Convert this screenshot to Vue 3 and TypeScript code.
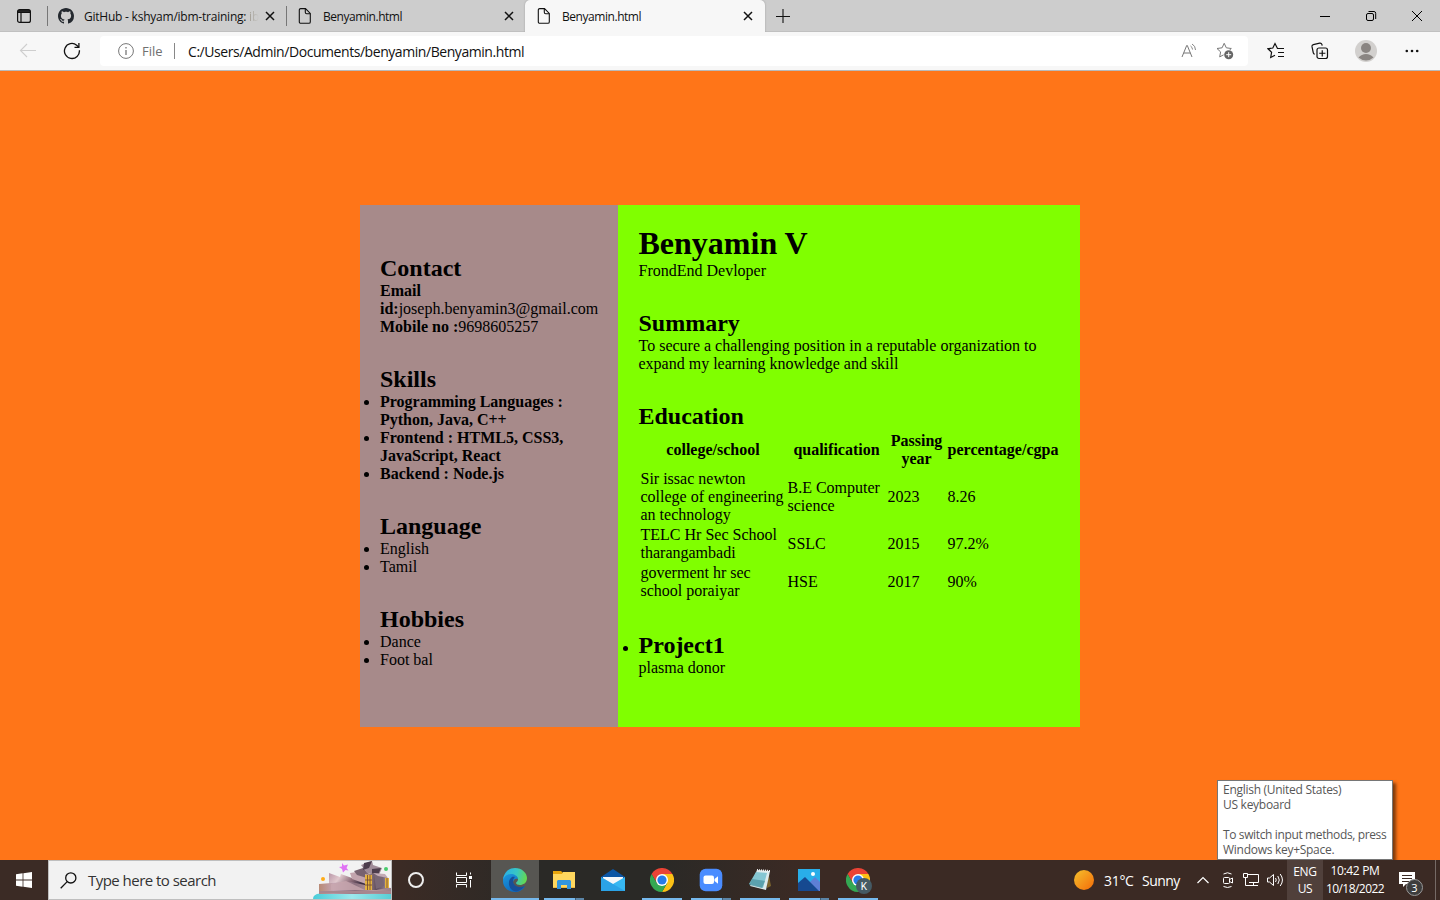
<script setup lang="ts">
interface Tab { title: string; icon: 'github' | 'file'; active: boolean; fade: string }
const tabs: Tab[] = [
  { title: 'GitHub - kshyam/ibm-training:', icon: 'github', active: false, fade: ' ib' },
  { title: 'Benyamin.html', icon: 'file', active: false, fade: '' },
  { title: 'Benyamin.html', icon: 'file', active: true, fade: '' },
]

const skills: string[] = [
  'Programming Languages : Python, Java, C++',
  'Frontend : HTML5, CSS3, JavaScript, React',
  'Backend : Node.js',
]
const languages: string[] = ['English', 'Tamil']
const hobbies: string[] = ['Dance', 'Foot bal']

interface School { place: string; degree: string; year: string; mark: string }
const schools: School[] = [
  { place: 'Sir issac newton college of engineering an technology', degree: 'B.E Computer science', year: '2023', mark: '8.26' },
  { place: 'TELC Hr Sec School tharangambadi', degree: 'SSLC', year: '2015', mark: '97.2%' },
  { place: 'goverment hr sec school poraiyar', degree: 'HSE', year: '2017', mark: '90%' },
]

interface TaskApp { name: string; state: 'none' | 'single' | 'multi' | 'active' }
const apps: TaskApp[] = [
  { name: 'edge', state: 'active' },
  { name: 'files', state: 'multi' },
  { name: 'mail', state: 'none' },
  { name: 'chrome', state: 'single' },
  { name: 'zoom', state: 'multi' },
  { name: 'notepad', state: 'single' },
  { name: 'photos', state: 'multi' },
  { name: 'profile', state: 'single' },
]
</script>

<template>
  <div class="screen">
    <header class="tabbar">
      <div class="tab-menu">
        <svg width="16" height="16" viewBox="0 0 16 16" fill="none" stroke="#111" stroke-width="1.2"><rect x="1.6" y="1.6" width="12.8" height="12.8" rx="2" /><path d="M2 3h12" stroke-width="1.8" /><path d="M2 4.5h12M5 4v10" /></svg>
      </div>
      <div v-for="(tab, i) in tabs" :key="i" class="tab" :class="{ active: tab.active, first: i === 0 }">
        <svg v-if="tab.icon === 'github'" class="tab-icon" width="16" height="16" viewBox="0 0 16 16"><path fill="#24292f" d="M8 0C3.58 0 0 3.58 0 8c0 3.54 2.29 6.53 5.47 7.59.4.07.55-.17.55-.38 0-.19-.01-.82-.01-1.49-2.01.37-2.53-.49-2.69-.94-.09-.23-.48-.94-.82-1.13-.28-.15-.68-.52-.01-.53.63-.01 1.08.58 1.23.82.72 1.21 1.87.87 2.33.66.07-.52.28-.87.51-1.07-1.78-.2-3.64-.89-3.64-3.95 0-.87.31-1.59.82-2.15-.08-.2-.36-1.02.08-2.12 0 0 .67-.21 2.2.82.64-.18 1.32-.27 2-.27s1.36.09 2 .27c1.53-1.04 2.2-.82 2.2-.82.44 1.1.16 1.92.08 2.12.51.56.82 1.27.82 2.15 0 3.07-1.87 3.75-3.65 3.95.29.25.54.73.54 1.48 0 1.07-.01 1.93-.01 2.2 0 .21.15.46.55.38A8.01 8.01 0 0 0 16 8c0-4.42-3.58-8-8-8z" /></svg>
        <svg v-else class="tab-icon" width="16" height="16" viewBox="0 0 16 16" fill="none" stroke="#111" stroke-width="1.1"><path d="M3.7.6h4.8l4.8 4.8v8.5a1.4 1.4 0 0 1-1.4 1.4H3.7a1.4 1.4 0 0 1-1.4-1.4V2A1.4 1.4 0 0 1 3.7.6z" /><path d="M8.3.8v3.5c0 .9.5 1.4 1.4 1.4h3.4" /></svg>
        <span class="tab-title" :class="{ wide: i === 0 }">{{ tab.title }}<span v-if="tab.fade" class="fade">{{ tab.fade }}</span></span>
        <svg class="tab-close" width="10" height="10" viewBox="0 0 10 10" stroke="#111" stroke-width="1.5"><path d="M1 1l8 8M9 1l-8 8" /></svg>
      </div>
      <div class="new-tab"><svg width="14" height="14" viewBox="0 0 14 14" stroke="#111" stroke-width="1.1"><path d="M7 0v14M0 7.5h14" /></svg></div>
      <div class="controls">
        <div class="control"><svg width="12" height="12" viewBox="0 0 12 12" stroke="#000"><path d="M1 6.5h10" /></svg></div>
        <div class="control"><svg width="12" height="12" viewBox="0 0 12 12" fill="none" stroke="#000"><rect x="1.5" y="3.5" width="7" height="7" rx="1.5" /><path d="M3.5 1.5H9A1.8 1.8 0 0 1 10.700 3.300V9" /></svg></div>
        <div class="control"><svg width="12" height="12" viewBox="0 0 12 12" stroke="#000"><path d="M1 1l10 10M11 1L1 11" /></svg></div>
      </div>
    </header>

    <nav class="toolbar">
      <div class="back"><svg width="18" height="16" viewBox="0 0 18 16" fill="none" stroke="#cecece" stroke-width="1.1"><path d="M17 7.500H1.500M8 1L1.500 7.500 8 14" /></svg></div>
      <div class="reload"><svg width="18" height="18" viewBox="0 0 18 18" fill="none" stroke="#111" stroke-width="1.3"><path d="M16.400 8.200A7.500 7.500 0 1 1 13.700 3.200L15.800 5.200" /><path d="M15.900 1v4.400h-4.400" /></svg></div>
      <div class="address">
        <svg class="info" width="16" height="16" viewBox="0 0 16 16" fill="none" stroke="#777"><circle cx="8" cy="8" r="7.4" /><path d="M8 7v5M8 4v1.400" stroke-width="1.3" /></svg>
        <span class="scheme">File</span>
        <span class="url">C:/Users/Admin/Documents/benyamin/Benyamin.html</span>
        <svg class="read" width="17" height="16" viewBox="0 0 17 16" fill="none" stroke="#777"><path d="M1 14L5.700 2.500h.6L11 14M2.800 10h6.500" /><path d="M9.500 3q2 1.200 2 3.500M11 1q3.500 1.800 3.500 6" stroke-width=".9" /></svg>
        <svg class="fav" width="18" height="18" viewBox="0 0 18 18"><path fill="none" stroke="#777" d="M8.200 1.300l2.100 4.500 5 .7-3.600 3.400.8 5-4.300-2.400-4.500 2.400.9-5L1 6.500l5.100-.7z" /><circle cx="12.700" cy="12.700" r="5.200" fill="#fff" /><circle cx="12.700" cy="12.700" r="4.500" fill="#666" /><path stroke="#fff" d="M12.700 10.200v5M10.200 12.700h5" /></svg>
      </div>
      <div class="tools">
        <div class="tool"><svg width="18" height="18" viewBox="0 0 18 18" fill="none" stroke="#111" stroke-width="1.2"><path d="M10.500 6.500L8 1.500 5.800 6 1 6.800l3.600 3.500-.9 5.200L8 13.200" /><path d="M10 6.500h7M11 10.500h6M11 14.500h6" /></svg></div>
        <div class="tool"><svg class="collections" width="18" height="18" viewBox="0 0 18 18" fill="none" stroke="#111" stroke-width="1.2"><rect x="6" y="6" width="10.500" height="10.500" rx="2" /><path d="M11.250 8.200v6.200M8.200 11.250h6.200M3.800 12.200q-1.200-.2-1.500-1.400L1 4.700q-.3-1.700 1.300-2.100L8.700 1.200q1.600-.3 2.200 1.200l.3 1.200" /></svg></div>
        <div class="tool avatar"><svg width="22" height="22" viewBox="0 0 22 22"><circle cx="11" cy="11" r="11" fill="#d2d0ce" /><circle cx="11" cy="8" r="5" fill="#8a8582" /><path fill="#8a8582" d="M3.500 17.500q3-3.500 7.500-3.500t7.500 3.500a11 11 0 0 1-15 0z" /></svg></div>
        <div class="tool"><svg width="14" height="4" viewBox="0 0 14 4" fill="#111"><circle cx="1.800" cy="2" r="1.300" /><circle cx="7" cy="2" r="1.300" /><circle cx="12.200" cy="2" r="1.300" /></svg></div>
      </div>
    </nav>

    <main class="page">
      <article class="resume">
        <aside class="side">
          <section>
            <h2>Contact</h2>
            <p><b>Email</b></p>
            <p class="mail"><b>id:</b>joseph.benyamin3@gmail.com</p>
            <p><b>Mobile no :</b>9698605257</p>
          </section>
          <section>
            <h2>Skills</h2>
            <ul><li v-for="s in skills" :key="s"><b>{{ s }}</b></li></ul>
          </section>
          <section>
            <h2>Language</h2>
            <ul><li v-for="l in languages" :key="l">{{ l }}</li></ul>
          </section>
          <section>
            <h2>Hobbies</h2>
            <ul><li v-for="h in hobbies" :key="h">{{ h }}</li></ul>
          </section>
        </aside>
        <div class="main">
          <h1>Benyamin V</h1>
          <p>FrondEnd Devloper</p>
          <section>
            <h2>Summary</h2>
            <p>To secure a challenging position in a reputable organization to<br />expand my learning knowledge and skill</p>
          </section>
          <section>
            <h2>Education</h2>
            <table>
              <colgroup><col class="c1" /><col class="c2" /><col class="c3" /><col class="c4" /></colgroup>
              <thead><tr><th>college/school</th><th>qualification</th><th>Passing year</th><th>percentage/cgpa</th></tr></thead>
              <tbody>
                <tr v-for="s in schools" :key="s.year"><td>{{ s.place }}</td><td>{{ s.degree }}</td><td>{{ s.year }}</td><td>{{ s.mark }}</td></tr>
              </tbody>
            </table>
          </section>
          <section>
            <ul><li><h2>Project1</h2></li></ul>
            <p>plasma donor</p>
          </section>
        </div>
      </article>
    </main>

    <div class="tooltip">
      <div>English (United States)</div>
      <div>US keyboard</div>
      <div>&nbsp;</div>
      <div class="long">To switch input methods, press</div>
      <div>Windows key+Space.</div>
    </div>

    <footer class="taskbar">
      <div class="start"><svg width="16" height="16" viewBox="0 0 16 16" fill="#fff"><path d="M0 2.200L6.600 1.300v6.300H0zM7.400 1.200L16 0v7.600H7.400zM0 8.400h6.600v6.300L0 13.800zM7.400 8.400H16V16l-8.600-1.200z" /></svg></div>
      <div class="search">
        <svg class="glass" width="17" height="17" viewBox="0 0 17 17" fill="none" stroke="#111" stroke-width="1.300"><circle cx="10.800" cy="5.900" r="5.100" /><path d="M7.200 9.600L.7 16.200" /></svg>
        <span>Type here to search</span>
        <svg class="art" width="78" height="38" viewBox="0 0 78 38">
          <defs>
            <linearGradient id="hull" x1="0" x2="1"><stop offset="0" stop-color="#b98a75" /><stop offset=".2" stop-color="#c3a4b4" /><stop offset=".5" stop-color="#8d7180" /><stop offset=".75" stop-color="#b89a9e" /><stop offset="1" stop-color="#9d8088" /></linearGradient>
            <linearGradient id="peak" x1="0" x2="1" y1="0" y2=".3"><stop offset="0" stop-color="#b895a6" /><stop offset=".35" stop-color="#e0c8cd" /><stop offset=".7" stop-color="#8b6b78" /><stop offset="1" stop-color="#3a2d40" /></linearGradient>
            <linearGradient id="tower" x1="0" x2="1"><stop offset="0" stop-color="#c9a493" /><stop offset=".5" stop-color="#5a4a5c" /><stop offset="1" stop-color="#9c8896" /></linearGradient>
            <linearGradient id="pool" x1="0" x2="1"><stop offset="0" stop-color="#49cdd9" /><stop offset=".5" stop-color="#9de8ed" /><stop offset="1" stop-color="#58ced5" /></linearGradient>
          </defs>
          <path fill="url(#pool)" d="M0 38q0-5 7-5.500h71V38z" />
          <path fill="url(#peak)" d="M16 12l11 4 1-3 11 4 10-6 5 3v12H16z" />
          <path fill="url(#hull)" d="M6 23l12-1 20-1 14 3 26 3v6H6z" />
          <path fill="#c2a4ad" d="M37 12l13-2 4 4-1 9-14-5z" />
          <path fill="#77626f" d="M41 10l9-3 6 6-2 4-10-3z" />
          <path fill="#a08c98" d="M48 4l11-4 1 4 9 3-3 7-12-2z" />
          <path fill="#4d3d4c" d="M51 2l8-2-3 7-6 2zM59 8l9-1-3 7-6-1z" />
          <path fill="url(#tower)" d="M52 13l12-1 10 4 1 11-12 2H52z" />
          <path fill="#796775" d="M61 13l9 2 1 10-8 3z" />
          <path fill="#c3abb5" d="M60 12l12 1 3 4-10-2z" />
          <path fill="#e5b33e" d="M52 14h7v15h-7zM72 17h4v10h-4z" />
          <path stroke="#6d4436" stroke-width=".8" d="M54.500 14v15M57 14v15M52 19h7M52 24h7M74 17v10" />
          <path fill="#c9a8af" d="M18 23l15-3 19 9H18z" opacity=".8" />
          <path fill="#a8868f" d="M6 30h72v2.500H6z" />
          <path fill="#e072f4" d="M29 2l2 2.500L35 3.500 33.500 7l2 2.500-3-.5L30 11.500 29 8l-3-2 3-.5z" />
          <circle cx="10" cy="18" r="2" fill="#ffac18" /><circle cx="73" cy="8" r="2" fill="#4acb6d" />
        </svg>
      </div>
      <div class="plain"><svg width="18" height="18" viewBox="0 0 18 18" fill="none" stroke="#eee" stroke-width="2"><circle cx="9" cy="9" r="7" /></svg></div>
      <div class="plain view"><svg width="18" height="18" viewBox="0 0 18 18" fill="none" stroke="#fff"><path d="M1.500 1.500v3h10v-3M1.500 16.500v-3h10v3M1.500 6.500h10v5h-10zM15.500 1.500v2M15.500 9v7.500" /><path fill="#fff" stroke="none" d="M14 5h3v3h-3z" /></svg></div>
      <div class="apps">
        <div v-for="app in apps" :key="app.name" class="app" :class="app.state">
          <svg v-if="app.name === 'edge'" width="24" height="24" viewBox="0 0 24 24">
            <defs>
              <linearGradient id="e1" x1="0" y1=".3" x2="1" y2=".5"><stop offset="0" stop-color="#2aaee8" /><stop offset=".55" stop-color="#38c7c3" /><stop offset="1" stop-color="#65d84e" /></linearGradient>
              <linearGradient id="e2" x1="0" y1="0" x2=".6" y2="1"><stop offset="0" stop-color="#1e9be0" /><stop offset="1" stop-color="#0b67bd" /></linearGradient>
            </defs>
            <path fill="url(#e2)" d="M0 13C0 5 6 4 9 5c4 0 6 3 6 6-3-1-5 1-5 4 1 4 6 6 12 3-2 4-6 6-10 6C5 24 0 19 0 13z" />
            <path fill="#174f99" d="M9 9c-4 3-4 8-1 12 2 2 5 3 7 2 3-1 5-3 7-5-7 3-12-1-12-5 0-2 1-3 2-4-1 0-2-.5-3 0z" />
            <path fill="url(#e1)" d="M0 12C1 4 6 0 12 0c7 0 12 5 12 10 0 5-4 7-7 7-2 0-4-1-4-2 0-1 2-1 2-4 0-3-4-5-7-5-4 0-7 3-8 6z" />
          </svg>
          <svg v-else-if="app.name === 'files'" class="folder" width="22" height="20" viewBox="0 0 22 20"><path fill="#e8a50c" d="M0 1h8l2 2v3H0z" /><path fill="#ffd75e" d="M0 4h9l1-2h12v16H0z" /><path fill="#edb843" d="M0 17h22v1H0z" /><path fill="#3295df" d="M4 19v-8l1-1h12l1 1v8h-4v-4H8v4z" /></svg>
          <svg v-else-if="app.name === 'mail'" width="24" height="24" viewBox="0 0 24 24"><path fill="#0b55a5" d="M0 9L12 1l12 8v5H0z" /><path fill="#f5f7fa" d="M2 9h20v8H2z" /><path fill="#37b7f2" d="M0 9l12 7 12-7v14H0z" /><path fill="#177fd3" d="M0 9l24 14H0z" opacity=".35" /></svg>
          <svg v-else-if="app.name === 'chrome' || app.name === 'profile'" width="24" height="24" viewBox="0 0 24 24"><path fill="#ea4335" d="M1.600 6A12 12 0 0 1 22.400 6H12L6.800 15z" /><path fill="#fbc116" d="M22.400 6A12 12 0 0 1 12 24l5.200-9L12 6z" /><path fill="#34a853" d="M1.600 6A12 12 0 0 0 12 24l5.200-9H6.800z" /><circle cx="12" cy="12" r="6" fill="#fff" /><circle cx="12" cy="12" r="4.600" fill="#277be8" /></svg>
          <svg v-else-if="app.name === 'zoom'" width="24" height="24" viewBox="0 0 24 24"><rect x=".7" y=".7" width="22.600" height="22.600" rx="6" fill="#4a8cff" /><rect x="4.500" y="7.500" width="10.500" height="8.500" rx="2" fill="#fff" /><path fill="#fff" d="M15.500 11L19 8.300v7.400L15.500 13z" /></svg>
          <svg v-else-if="app.name === 'notepad'" width="24" height="24" viewBox="0 0 24 24"><path fill="#7d652e" d="M20 3l3 15-4 2z" /><path fill="#dceaec" d="M9 2l13 1-4 19-16-4z" /><path fill="#85c6d2" d="M8 4l11 1-4 15-14-4z" /><path fill="#408996" d="M4 11l13 2-3 7-13-3z" opacity=".6" /><path stroke="#eee" stroke-width="2" stroke-dasharray="1 1" d="M9 2l13 1" /></svg>
          <svg v-else width="22" height="22" viewBox="0 0 22 22"><path fill="#29aee9" d="M0 0h22v22H0z" /><path fill="#5d7fd6" d="M11 14l6-6 5 5v9H11z" /><path fill="#164990" d="M0 14l7-6 14 14H0z" /><circle cx="15" cy="5" r="2" fill="#fff" /></svg>
          <span v-if="app.name === 'profile'" class="badge k">K</span>
        </div>
      </div>
      <div class="tray">
        <svg class="sun" width="20" height="20" viewBox="0 0 20 20"><defs><linearGradient id="sun" x1="0" y1="0" x2="1" y2="1"><stop offset="0" stop-color="#f4c02d" /><stop offset="1" stop-color="#f46b08" /></linearGradient></defs><circle cx="10" cy="10" r="10" fill="url(#sun)" /></svg>
        <span class="temp">31°C</span><span class="sky">Sunny</span>
        <div class="status"><svg width="12" height="8" viewBox="0 0 12 8" fill="none" stroke="#fff" stroke-width="1.200"><path d="M.5 7L6 1.500 11.500 7" /></svg></div>
        <div class="status"><svg width="14" height="16" viewBox="0 0 14 16" fill="none" stroke="#fff"><rect x="3.500" y="5.500" width="6" height="6" rx="1" /><path d="M9.500 7.500l3-1.500v5l-3-1.500M3.500 2q4-2.500 8 0M3.500 14.500q4 2 8 0" /></svg></div>
        <div class="status"><svg width="17" height="14" viewBox="0 0 17 14" fill="none" stroke="#fff"><path d="M5 1.500h10.500v8H6M10.500 9.500v3M6 12.500h9M.5.500h4v4h-4zM2.500 4.500v8h3.500" /></svg></div>
        <div class="status"><svg width="17" height="14" viewBox="0 0 17 14" fill="none" stroke="#fff"><path d="M.5 5h2L6.500 1.500v11L2.500 9h-2zM8.500 5q1.500 2 0 4M10.800 3q3 4 0 8M13.200 1q4.500 6 0 12" /></svg></div>
        <div class="lang"><span>ENG</span><span>US</span></div>
        <div class="clock"><span class="time">10:42 PM</span><span class="date">10/18/2022</span></div>
        <div class="notify"><svg width="16" height="16" viewBox="0 0 16 16"><path fill="#fff" d="M0 0h16v12H7l-3 3v-3H0z" /><path stroke="#3b2a24" d="M3 3.500h10M3 6.500h10M3 9.500h7" /></svg><span class="badge count">3</span></div>
        <div class="peek"></div>
      </div>
    </footer>
  </div>
</template>

<style>
html, body { margin: 0; overflow: hidden; }
</style>

<style scoped>
* { box-sizing: border-box; margin: 0; padding: 0; }
svg { display: block; flex: none; }
.screen { position: relative; width: 1440px; height: 900px; display: flex; flex-direction: column; overflow: hidden; background: #ff7518; font-family: "Open Sans", "Noto Sans", sans-serif; color: #111; white-space: nowrap; }

.tabbar { display: flex; height: 32px; flex: none; background: #cdcdcd; box-shadow: inset 0 -1px #c0c0c0; }
.tab-menu { width: 47px; display: flex; align-items: center; padding-left: 16px; }
.tab { width: 239px; display: flex; align-items: center; padding-left: 11px; background: linear-gradient(#777, #777) 0 6px / 1px 20px no-repeat; }
.tab.active { width: 240px; background: #f7f7f7; border-radius: 5px 5px 0 0; box-shadow: 0 0 2px #999; clip-path: inset(0 -3px 0 -3px); }
.tab-title { width: 175px; margin-left: 10px; font-size: 12px; letter-spacing: -.45px; }
.tab-title.wide { letter-spacing: -.23px; }
.fade { white-space: pre; background: linear-gradient(90deg, #8f897c, #cdcdcd); background-clip: text; color: transparent; }
.tab-close { margin-left: 6px; }
.tab.first .tab-close { margin-left: 6px; }
.new-tab { width: 35px; display: flex; align-items: center; justify-content: center; }
.controls { display: flex; margin-left: auto; }
.control { width: 46px; display: flex; align-items: center; justify-content: center; }

.toolbar { display: flex; align-items: center; height: 39px; flex: none; background: #f7f7f7; border-bottom: 1px solid #b9b9b9; }
.back { width: 63px; padding-left: 19px; }
.reload { width: 37px; }
.address { width: 1148px; height: 30px; display: flex; align-items: center; padding-left: 18px; background: #fff; border-radius: 4px; }
.scheme { width: 33px; margin-left: 8px; font-size: 13px; color: #707070; border-right: 1px solid #888; line-height: 16px; }
.url { margin-left: 13px; font-size: 14px; letter-spacing: -.44px; }
.read { margin-left: auto; }
.fav { margin: 0 14px 0 18px; }
.tools { display: flex; padding-left: 5px; }
.tool { width: 45px; height: 30px; display: flex; align-items: center; justify-content: center; }
.tool.avatar { width: 46px; }
.collections { margin-right: 1px; }

.page { flex: 1; display: flex; justify-content: center; align-items: flex-start; padding-top: 134px; font-family: "Liberation Serif", "Times New Roman", serif; font-size: 16px; line-height: 18px; color: #000; }
.resume { display: flex; width: 720px; height: 522px; white-space: normal; }
.side { width: 258px; padding: 20px; background: #a78a8a; }
.main { width: 462px; padding: 20px 19.5px 20px 20.500px; background: #80ff00; }
section { margin: 30px 0; }
h1 { font-size: 32px; line-height: 37px; }
h2 { font-size: 24px; line-height: 27px; }
ul { list-style: disc outside; }
.mail { white-space: nowrap; }
table { width: 422px; table-layout: fixed; border-spacing: 2px; }
.c1 { width: 145px; } .c2 { width: 98px; } .c3 { width: 58px; } .c4 { width: 111px; }
td { text-align: left; vertical-align: middle; }

.tooltip { position: absolute; left: 1217px; top: 780px; width: 176px; height: 80px; padding: 1px 5px; background: #fff; border: 1px solid #767676; box-shadow: 3px 3px 3px rgba(0, 0, 0, .5); color: #575757; font-size: 12px; line-height: 15px; letter-spacing: -.28px; }
.tooltip .long { letter-spacing: -.37px; }

.taskbar { position: relative; display: flex; height: 40px; flex: none; background: linear-gradient(90deg, #3b2b25 0, #3b2b25 400px, #2a2926 540px, #2a2926 660px, #3b2a24 800px); }
.start { width: 48px; display: flex; align-items: center; justify-content: center; }
.search { width: 344px; display: flex; align-items: center; padding-left: 11px; background: #f2f2f2; border: 1px solid #bfbfbf; font-size: 15px; color: #333; }
.search span { margin-left: 11px; letter-spacing: -.53px; }
.art { margin-left: auto; }
.plain { width: 48px; display: flex; align-items: center; justify-content: center; }
.plain.view { width: 51px; padding-right: 3px; }
.apps { display: flex; gap: 1px; }
.app { position: relative; width: 48px; display: flex; align-items: center; justify-content: center; background: linear-gradient(#76b9ed, #76b9ed) 4px 38px / 40px 2px no-repeat; }
.app.none { background: none; }
.app.active { background: linear-gradient(#76b9ed, #76b9ed) 0 38px / 48px 2px no-repeat #575652; }
.app.multi { background: linear-gradient(90deg, #76b9ed 31px, #3f5d74 31px, #3f5d74 32px, #5b85a7 32px) 4px 38px / 40px 2px no-repeat; }
.folder { margin-right: 1px; }
.badge { position: absolute; display: flex; align-items: center; justify-content: center; border-radius: 50%; color: #fff; }
.badge.k { left: 22px; top: 18px; width: 16px; height: 16px; background: #455a64; font: 10px Roboto, sans-serif; }
.tray { display: flex; align-items: center; margin-left: auto; color: #fff; font-size: 12px; }
.temp { width: 38px; margin-left: 10px; font-size: 14px; letter-spacing: -.3px; }
.sky { width: 49px; font-size: 14px; letter-spacing: -.55px; }
.status { width: 24px; display: flex; justify-content: center; }
.lang { width: 36px; height: 40px; display: flex; flex-direction: column; align-items: center; padding-top: 3px; background: #50403b; line-height: 17px; letter-spacing: -.3px; }
.clock { width: 64px; height: 40px; display: flex; flex-direction: column; align-items: center; padding-top: 2px; line-height: 18px; letter-spacing: -.35px; }
.date { letter-spacing: -.55px; }
.notify { position: relative; width: 48px; height: 40px; padding: 12px 0 0 12px; }
.badge.count { left: 19px; top: 19px; width: 17px; height: 17px; background: #3d3d3d; border: 1px solid #999; font-size: 11px; }
.peek { width: 5px; height: 40px; border-left: 1px solid #756a66; }
</style>
